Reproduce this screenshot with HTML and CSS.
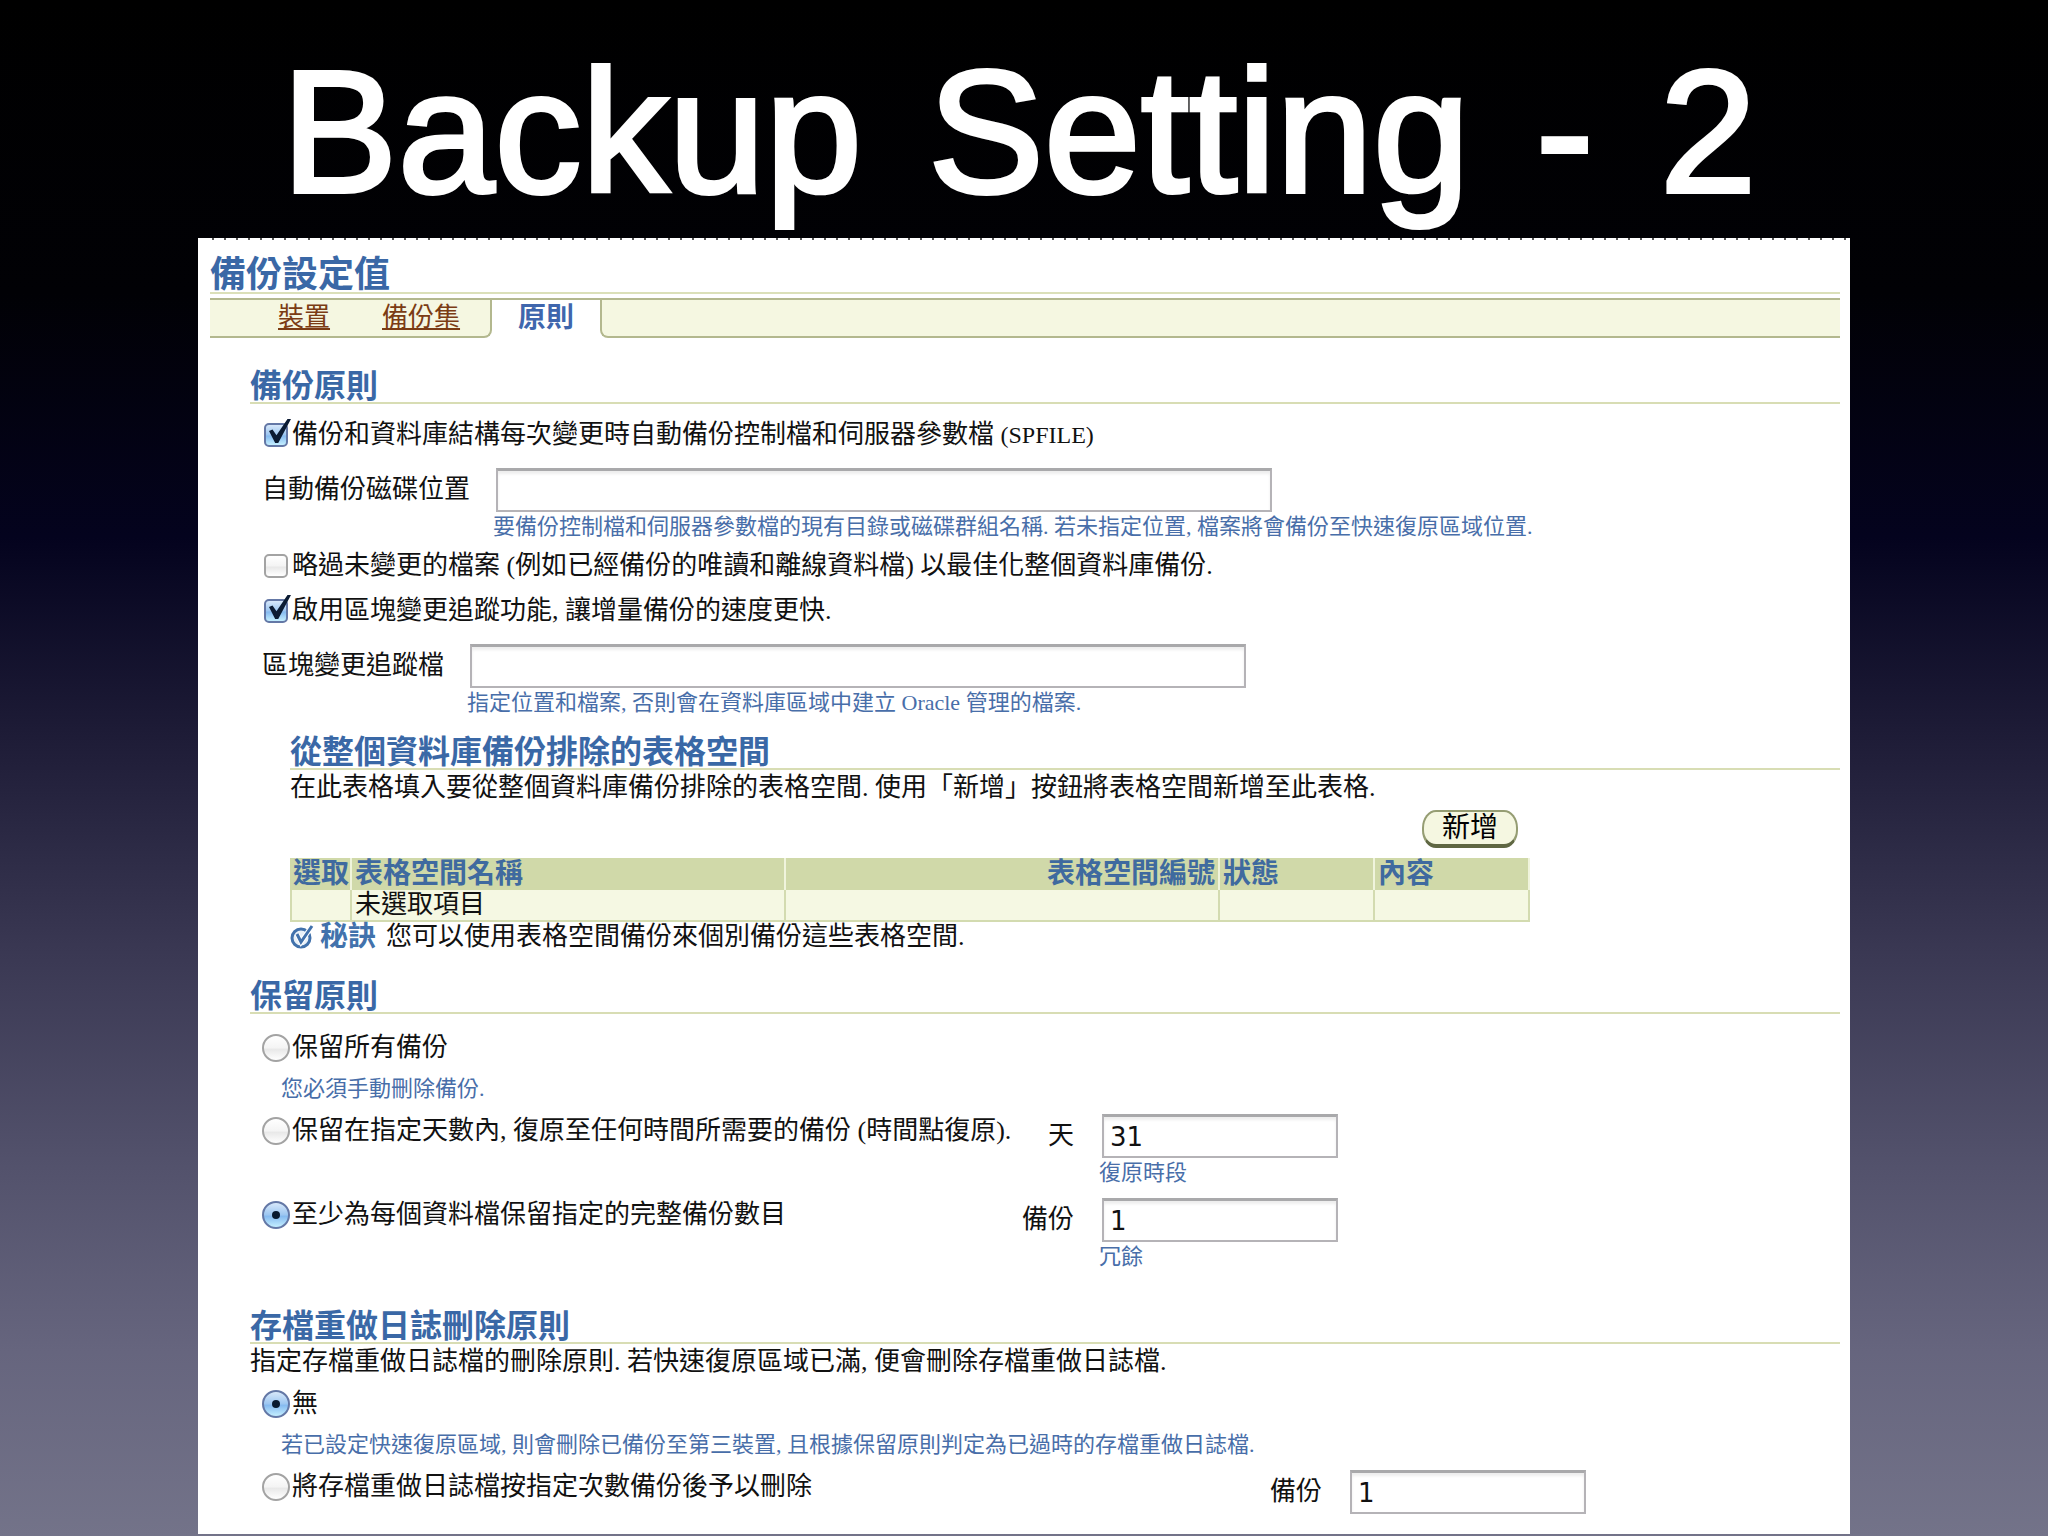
FILE: index.html
```html
<!DOCTYPE html>
<html lang="zh-Hant">
<head>
  <meta charset="UTF-8" />
  <meta name="viewport" content="width=device-width, initial-scale=1.0" />
  <title>Backup Setting - 2</title>
  <link rel="stylesheet" href="styles.css">
</head>
<body>

  <h1 class="slide-title"><span>Backup</span> <span>Setting</span> <span>-</span> <span>2</span></h1>

  <main class="panel">
    <h2 class="page-title">備份設定值</h2>

    <nav class="tabs">
      <div class="tabs-left">
        <a href="#device">裝置</a>
        <a href="#backup-set">備份集</a>
      </div>
      <div class="tab-active">原則</div>
      <div class="tabs-right"></div>
    </nav>

    <form class="settings">
      <!-- 備份原則 -->
      <section class="policy">
        <h3>備份原則</h3>
        <div class="options">
          <label class="choice"><input type="checkbox" checked />備份和資料庫結構每次變更時自動備份控制檔和伺服器參數檔 <span class="latin">(SPFILE)</span></label>

          <div class="field">
            <label for="disk-location">自動備份磁碟位置</label>
            <div>
              <input type="text" id="disk-location" class="text-long" />
              <p class="hint">要備份控制檔和伺服器參數檔的現有目錄或磁碟群組名稱. 若未指定位置, 檔案將會備份至快速復原區域位置.</p>
            </div>
          </div>

          <label class="choice"><input type="checkbox" />略過未變更的檔案 (例如已經備份的唯讀和離線資料檔) 以最佳化整個資料庫備份.</label>
          <label class="choice"><input type="checkbox" checked />啟用區塊變更追蹤功能, 讓增量備份的速度更快.</label>

          <div class="field">
            <label for="tracking-file">區塊變更追蹤檔</label>
            <div>
              <input type="text" id="tracking-file" class="text-long" />
              <p class="hint">指定位置和檔案, 否則會在資料庫區域中建立 Oracle 管理的檔案.</p>
            </div>
          </div>
        </div>

        <div class="excluded">
          <h3>從整個資料庫備份排除的表格空間</h3>
          <p>在此表格填入要從整個資料庫備份排除的表格空間. 使用「新增」按鈕將表格空間新增至此表格.</p>
          <div class="excluded-table">
            <div class="toolbar"><button type="button">新增</button></div>
            <table>
              <thead>
                <tr>
                  <th class="col-select">選取</th>
                  <th class="col-name">表格空間名稱</th>
                  <th class="col-number">表格空間編號</th>
                  <th class="col-status">狀態</th>
                  <th class="col-content">內容</th>
                </tr>
              </thead>
              <tbody>
                <tr>
                  <td></td>
                  <td>未選取項目</td>
                  <td></td>
                  <td></td>
                  <td></td>
                </tr>
              </tbody>
            </table>
          </div>
          <p class="tip">
            <svg width="26" height="26" viewBox="0 0 26 26" aria-hidden="true">
              <circle cx="11" cy="14" r="9" fill="#e9f1f8" stroke="#4272ac" stroke-width="3" />
              <path d="M7 10l4 8L22 2" fill="none" stroke="#fff" stroke-width="5" />
              <path d="M7 10l4 8L22 2" fill="none" stroke="#4272ac" stroke-width="3" />
            </svg>
            <strong>秘訣</strong>
            <span>您可以使用表格空間備份來個別備份這些表格空間.</span>
          </p>
        </div>
      </section>

      <!-- 保留原則 -->
      <section class="retention">
        <h3>保留原則</h3>
        <div class="options">
          <label class="choice"><input type="radio" name="retention" />保留所有備份</label>
          <p class="hint indent">您必須手動刪除備份.</p>

          <div class="choice-row">
            <label class="choice"><input type="radio" name="retention" />保留在指定天數內, 復原至任何時間所需要的備份 (時間點復原).</label>
            <label class="unit" for="days">天</label>
            <div>
              <input type="text" id="days" class="text-short" value="31" />
              <p class="hint">復原時段</p>
            </div>
          </div>
          <div class="choice-row">
            <label class="choice"><input type="radio" name="retention" checked />至少為每個資料檔保留指定的完整備份數目</label>
            <label class="unit" for="copies">備份</label>
            <div>
              <input type="text" id="copies" class="text-short" value="1" />
              <p class="hint">冗餘</p>
            </div>
          </div>
        </div>
      </section>

      <!-- 存檔重做日誌刪除原則 -->
      <section class="archive">
        <h3>存檔重做日誌刪除原則</h3>
        <p>指定存檔重做日誌檔的刪除原則. 若快速復原區域已滿, 便會刪除存檔重做日誌檔.</p>
        <div class="options">
          <label class="choice"><input type="radio" name="archive" checked />無</label>
          <p class="hint indent">若已設定快速復原區域, 則會刪除已備份至第三裝置, 且根據保留原則判定為已過時的存檔重做日誌檔.</p>
          <div class="choice-row wide">
            <label class="choice"><input type="radio" name="archive" />將存檔重做日誌檔按指定次數備份後予以刪除</label>
            <label class="unit" for="log-copies">備份</label>
            <div>
              <input type="text" id="log-copies" class="text-short" value="1" />
            </div>
          </div>
        </div>
      </section>
    </form>
  </main>

</body>
</html>
```
FILE: styles.css
```css
* {
  box-sizing: border-box;
}

html {
  min-height: 100%;
  background: linear-gradient(#000 0%, #010105 19%, #04031e 35%, #1e1c37 48%, #3a3853 62%, #53526c 76%, #66657e 88%, #737389 100%);
}

body {
  margin: 0;
  padding: 0 198px 2px;
  font-family: "Liberation Serif", "Noto Sans CJK TC", serif;
  font-size: 26px;
  line-height: 36px;
  color: #111;
}

h2, h3, p {
  margin: 0;
}

.slide-title {
  display: flex;
  justify-content: center;
  gap: 66px;
  margin: 0;
  padding: 32px 10px 6px 0;
  font-family: "Liberation Sans", sans-serif;
  font-size: 174px;
  font-weight: normal;
  line-height: 200px;
  color: #fff;
  -webkit-text-stroke: 4px #fff;
}

.panel {
  padding: 18px 10px 20px 12px;
  background: repeating-linear-gradient(90deg, #fff 0 10px, #555 10px 12px) 4px 0 / 100% 2px no-repeat, #fff;
}

/* headings */
.page-title {
  padding-top: 2px;
  border-bottom: 2px solid #dbe0b9;
  font-size: 36px;
  line-height: 34px;
  color: #3a68a6;
}

h3 {
  padding-top: 2px;
  border-bottom: 2px solid #d8ddb4;
  font-size: 32px;
  line-height: 32px;
  color: #3a68a6;
}

/* tabs */
.tabs {
  display: flex;
  height: 40px;
  margin-top: 4px;
  border-top: 2px solid #b3b88e;
}

.tabs-left, .tabs-right {
  background: #f5f7e1;
  border-bottom: 2px solid #b3b88e;
}

.tabs-left {
  display: flex;
  gap: 52px;
  padding: 0 30px 0 68px;
  border-right: 2px solid #b3b88e;
  border-bottom-right-radius: 8px;
}

.tabs-left a {
  color: #7b3c14;
  text-decoration-thickness: 2px;
  text-underline-offset: 2px;
}

.tab-active {
  padding: 0 26px;
  font-size: 28px;
  font-weight: bold;
  color: #3f66ad;
}

.tabs-right {
  flex: 1;
  border-left: 2px solid #b3b88e;
  border-bottom-left-radius: 8px;
}

/* sections */
.settings {
  padding-left: 40px;
}

.policy {
  margin-top: 30px;
}

.retention {
  margin-top: 26px;
}

.archive {
  margin-top: 36px;
}

.options {
  padding: 11px 0 0 12px;
}

.retention .options {
  padding-top: 14px;
}

.archive .options {
  padding-top: 4px;
}

.choice {
  display: flex;
  align-items: center;
  width: fit-content;
  height: 40px;
  white-space: pre;
}

.choice + .choice {
  margin-top: 5px;
}

.latin {
  font-size: 24px;
}

.field {
  display: flex;
  align-items: flex-start;
  gap: 26px;
  margin: 13px 0 4px;
}

.field label {
  line-height: 44px;
}

.hint {
  margin-left: -3px;
  font-size: 22px;
  line-height: 30px;
  color: #486ea9;
}

.hint.indent {
  margin: 6px 0 10px 19px;
}

.choice-row {
  display: grid;
  grid-template-columns: 760px 52px auto;
  justify-content: start;
  margin-top: 10px;
}

.choice-row.wide {
  grid-template-columns: 1008px 52px auto;
}

.choice-row .choice {
  height: 34px;
}

.choice-row > div {
  padding-left: 28px;
}

.unit {
  line-height: 44px;
  text-align: right;
}

/* controls */
input[type="text"] {
  display: block;
  height: 44px;
  padding: 2px 6px;
  border: 2px solid #b5b3b7;
  border-top: 3px solid #a9a9ab;
  background: #fff;
  box-shadow: inset 0 3px 3px #eee;
  font-family: "DejaVu Sans", sans-serif;
  font-size: 26px;
  color: #111;
}

.text-long {
  width: 776px;
}

.text-short {
  width: 236px;
}

input[type="checkbox"], input[type="radio"] {
  appearance: none;
  position: relative;
  flex: none;
  border: 2px solid #a3a3a3;
  background: linear-gradient(#fff, #f4f4f4 50%, #e8e8e8 55%, #fff);
}

input[type="checkbox"] {
  width: 24px;
  height: 24px;
  margin: 0 4px 0 2px;
  border-radius: 5px;
}

input[type="radio"] {
  width: 28px;
  height: 28px;
  margin: 0 2px 0 0;
  border-radius: 50%;
}

input[type="checkbox"]:checked, input[type="radio"]:checked {
  border-color: #6478a6;
  background: linear-gradient(#d7e8fa, #9cc6f1 50%, #85baf0 55%, #c4efff);
}

input[type="checkbox"]:checked::before {
  content: "";
  position: absolute;
  left: 3px;
  top: -6px;
  width: 22px;
  height: 24px;
  background: #0b1b33;
  clip-path: polygon(0 50%, 16% 44%, 34% 68%, 84% 0, 100% 0, 42% 100%, 28% 100%);
}

input[type="radio"]:checked::before {
  content: "";
  position: absolute;
  left: 8px;
  top: 8px;
  width: 8px;
  height: 8px;
  border-radius: 50%;
  background: #081a30;
}

button {
  display: block;
  width: 96px;
  height: 38px;
  padding: 0;
  border: 2px solid #959d73;
  border-bottom: 4px solid #5f6743;
  border-radius: 14px / 18px;
  background: #f5f7e1;
  font-family: "Liberation Sans", "Noto Sans CJK TC", sans-serif;
  font-size: 28px;
  line-height: 30px;
  color: #000;
}

/* excluded tablespaces */
.excluded {
  margin-top: 16px;
  padding-left: 40px;
}

.excluded-table {
  width: 1240px;
}

.toolbar {
  display: flex;
  justify-content: flex-end;
  padding: 4px 12px 10px 0;
}

table {
  width: 100%;
  table-layout: fixed;
  border-spacing: 0;
}

th, td {
  height: 32px;
  padding: 0 3px;
  line-height: 30px;
  text-align: left;
  white-space: nowrap;
}

th {
  border-right: 2px solid #f0f4dc;
  background: #d0d9a9;
  font-size: 28px;
  color: #3f6a9f;
}

td {
  border: solid #d3dbb0;
  border-width: 0 2px 2px 0;
  background: #f5f8e3;
}

td:first-child {
  border-left-width: 2px;
}

.col-select {
  width: 62px;
}

.col-name, .col-number {
  width: 434px;
}

.col-number {
  text-align: right;
}

.col-status {
  width: 155px;
}

.tip {
  display: flex;
  align-items: center;
  line-height: 30px;
}

.tip strong {
  margin: 0 10px 0 4px;
  font-size: 28px;
  color: #4272ac;
}
```
